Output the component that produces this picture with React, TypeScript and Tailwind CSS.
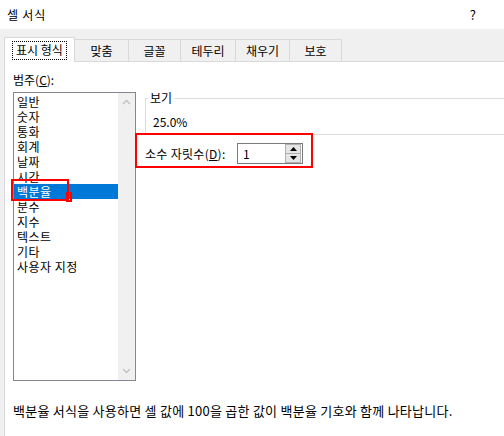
import React from 'react';

const tabs = ['표시 형식', '맞춤', '글꼴', '테두리', '채우기', '보호'];
const tabWidths = [71, 54, 52, 55, 54, 52];

const categories = ['일반', '숫자', '통화', '회계', '날짜', '시간', '백분율', '분수', '지수', '텍스트', '기타', '사용자 지정'];

const ChevronUp: React.FC = () => (
  <svg width="9" height="6" viewBox="0 0 9 6">
    <path d="M1 5 L4.5 1.5 L8 5" fill="none" stroke="#c0c0c0" strokeWidth="1.3" />
  </svg>
);

const ChevronDown: React.FC = () => (
  <svg width="9" height="6" viewBox="0 0 9 6">
    <path d="M1 1 L4.5 4.5 L8 1" fill="none" stroke="#c0c0c0" strokeWidth="1.3" />
  </svg>
);

const App: React.FC = () => {
  return (
    <div
      className="relative w-[504px] h-[436px] bg-white overflow-hidden text-[12px] text-black flex flex-col"
      style={{ fontFamily: '"Noto Sans CJK KR", "Noto Sans", sans-serif' }}
    >
      {/* Title bar */}
      <div className="h-[29px] shrink-0 flex items-center justify-between pl-[7px] pr-[28px]">
        <span className="leading-none tracking-[0.8px]">셀 서식</span>
        <span className="text-[13px] leading-none">?</span>
      </div>

      {/* Tab strip */}
      <div className="flex-1 flex flex-col bg-[#f0f0f0]">
        <div className="h-[32px] shrink-0 flex items-end pl-[4px]">
          {tabs.map((t, i) =>
            i === 0 ? (
              <div
                key={t}
                className="h-[25px] bg-white border border-b-0 border-[#d9d9d9] flex items-center justify-center relative top-[1px] z-10"
                style={{ width: tabWidths[i] }}
              >
                <span className="border border-dotted border-black px-[3px] h-[19px] flex items-center leading-none">
                  {t}
                </span>
              </div>
            ) : (
              <div
                key={t}
                className="h-[22px] border border-l-0 border-b-0 border-[#d9d9d9] flex items-center justify-center leading-none"
                style={{ width: tabWidths[i] }}
              >
                {t}
              </div>
            )
          )}
        </div>

        {/* Panel */}
        <div className="flex-1 ml-[4px] bg-white border-t border-l border-[#d9d9d9] flex flex-col">
          <div className="flex pl-[8px] pt-[9px]">
            {/* Category list */}
            <div className="w-[123px] flex flex-col">
              <div className="h-[18px] leading-[18px]">
                범주(<span className="underline">C</span>):
              </div>
              <div className="mt-[3px] h-[289px] border border-[#828790] flex">
                <div className="flex-1 pt-[1px]">
                  {categories.map((c) => (
                    <div
                      key={c}
                      className={`h-[15px] leading-[15px] pl-[3px] tracking-[0.5px] ${c === '백분율' ? 'bg-[#0078d7] text-white' : ''}`}
                    >
                      {c}
                    </div>
                  ))}
                </div>
                <div className="w-[17px] bg-[#f0f0f0] flex flex-col items-center justify-between py-[6px]">
                  <ChevronUp />
                  <ChevronDown />
                </div>
              </div>
            </div>

            {/* Right side */}
            <div className="flex-1 ml-[9px] flex flex-col">
              <div className="mt-[27px] h-[37px] border-t border-l border-b border-[#dcdcdc] relative">
                <span className="absolute -top-[9px] left-[2px] bg-white px-[2px] leading-[16px]">보기</span>
                <div className="pl-[7px] pt-[15px] leading-[16px]">25.0%</div>
              </div>
              <div className="mt-[8px] flex items-center">
                <span className="w-[92px] leading-none tracking-[0.3px]">
                  소수 자릿수(<span className="underline">D</span>):
                </span>
                <div className="w-[66px] h-[21px] border border-[#7a7a7a] flex items-center">
                  <span className="flex-1 pl-[5px] leading-none">1</span>
                  <div className="w-[16px] h-[19px] flex flex-col mr-[1px]">
                    <div className="flex-1 bg-[#e5e5e5] border border-[#b0b0b0] flex items-center justify-center">
                      <svg width="7" height="4" viewBox="0 0 7 4">
                        <path d="M0 4 L3.5 0 L7 4 Z" fill="#000" />
                      </svg>
                    </div>
                    <div className="flex-1 bg-[#e5e5e5] border border-t-0 border-[#b0b0b0] flex items-center justify-center">
                      <svg width="7" height="4" viewBox="0 0 7 4">
                        <path d="M0 0 L3.5 4 L7 0 Z" fill="#000" />
                      </svg>
                    </div>
                  </div>
                </div>
              </div>
            </div>
          </div>

          <div className="pl-[8px] mt-[22px] text-[13px] leading-[16px] tracking-[0.25px]">
            백분율 서식을 사용하면 셀 값에 100을 곱한 값이 백분율 기호와 함께 나타납니다.
          </div>
        </div>
      </div>

      {/* Red annotation boxes */}
      <div className="absolute left-[11px] top-[179px] w-[58px] h-[22px] border-2 border-[#ff0000]" />
      <div className="absolute left-[66px] top-[192px] w-[6px] h-[10px] border-2 border-t-0 border-[#ff0000]" />
      <div className="absolute left-[135px] top-[133px] w-[178px] h-[35px] border-2 border-[#ff0000]" />
    </div>
  );
};

export default App;
